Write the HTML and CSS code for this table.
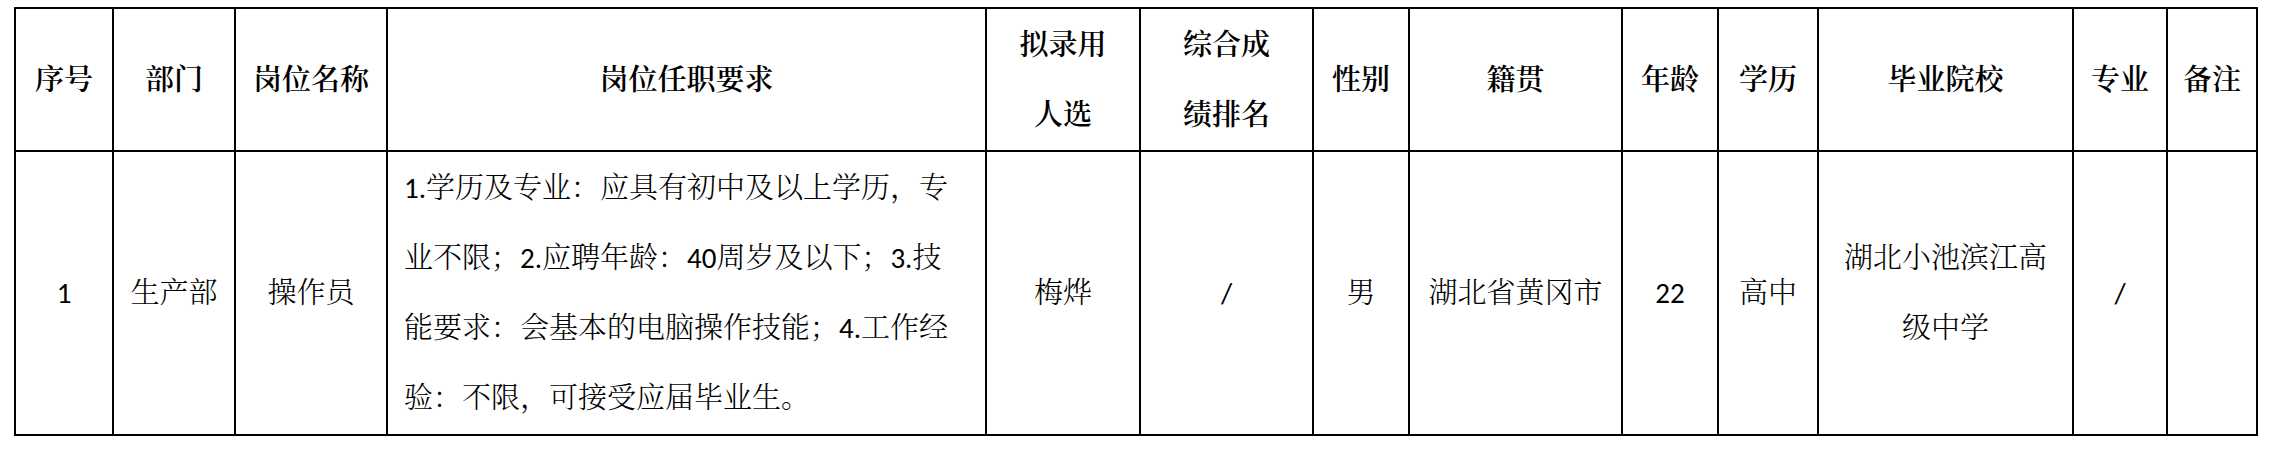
FILE: index.html
```html
<!DOCTYPE html>
<html lang="zh-CN">
<head>
<meta charset="utf-8">
<title>拟录用人员公示</title>
<link rel="stylesheet" href="styles.css">
</head>
<body>
<div class="page">
  <table class="grid">
    <colgroup>
      <col class="w-no">
      <col class="w-dept">
      <col class="w-post">
      <col class="w-req">
      <col class="w-name">
      <col class="w-rank">
      <col class="w-sex">
      <col class="w-home">
      <col class="w-age">
      <col class="w-edu">
      <col class="w-school">
      <col class="w-major">
      <col class="w-note">
    </colgroup>
    <thead>
      <tr class="head-row">
        <th>序号</th>
        <th>部门</th>
        <th>岗位名称</th>
        <th>岗位任职要求</th>
        <th>拟录用<br>人选</th>
        <th>综合成<br>绩排名</th>
        <th>性别</th>
        <th>籍贯</th>
        <th>年龄</th>
        <th>学历</th>
        <th>毕业院校</th>
        <th>专业</th>
        <th>备注</th>
      </tr>
    </thead>
    <tbody>
      <tr class="data-row">
        <td>1</td>
        <td>生产部</td>
        <td>操作员</td>
        <td class="req">1.学历及专业：应具有初中及以上学历，专<br>业不限；2.应聘年龄：40周岁及以下；3.技<br>能要求：会基本的电脑操作技能；4.工作经<br>验：不限，可接受应届毕业生。</td>
        <td>梅烨</td>
        <td>/</td>
        <td>男</td>
        <td>湖北省黄冈市</td>
        <td>22</td>
        <td>高中</td>
        <td>湖北小池滨江高<br>级中学</td>
        <td>/</td>
        <td></td>
      </tr>
    </tbody>
  </table>
</div>
</body>
</html>
```

FILE: styles.css
```css
html, body {
  margin: 0;
  padding: 0;
  background: #ffffff;
}

.page {
  padding: 7px 0 0 14px;
}

.grid {
  border-collapse: collapse;
  table-layout: fixed;
  width: 2244px;
  font-family: "Carlito", "Lato", "Noto Serif CJK SC", "Noto Sans CJK SC", sans-serif;
  font-size: 29px;
  line-height: 70px;
  color: #000000;
}

.grid th,
.grid td {
  border: 2px solid #000000;
  padding: 0 4px;
  text-align: center;
  vertical-align: middle;
  white-space: nowrap;
}

.grid th {
  font-weight: 600;
}

.grid td {
  font-weight: 300;
}

.head-row {
  height: 143px;
}

.data-row {
  height: 284px;
}

.grid td.req {
  text-align: left;
  padding: 0 10px 0 16px;
}

.w-no { width: 98px; }
.w-dept { width: 122px; }
.w-post { width: 152px; }
.w-req { width: 599px; }
.w-name { width: 154px; }
.w-rank { width: 173px; }
.w-sex { width: 96px; }
.w-home { width: 213px; }
.w-age { width: 96px; }
.w-edu { width: 100px; }
.w-school { width: 255px; }
.w-major { width: 94px; }
.w-note { width: 90px; }
```
